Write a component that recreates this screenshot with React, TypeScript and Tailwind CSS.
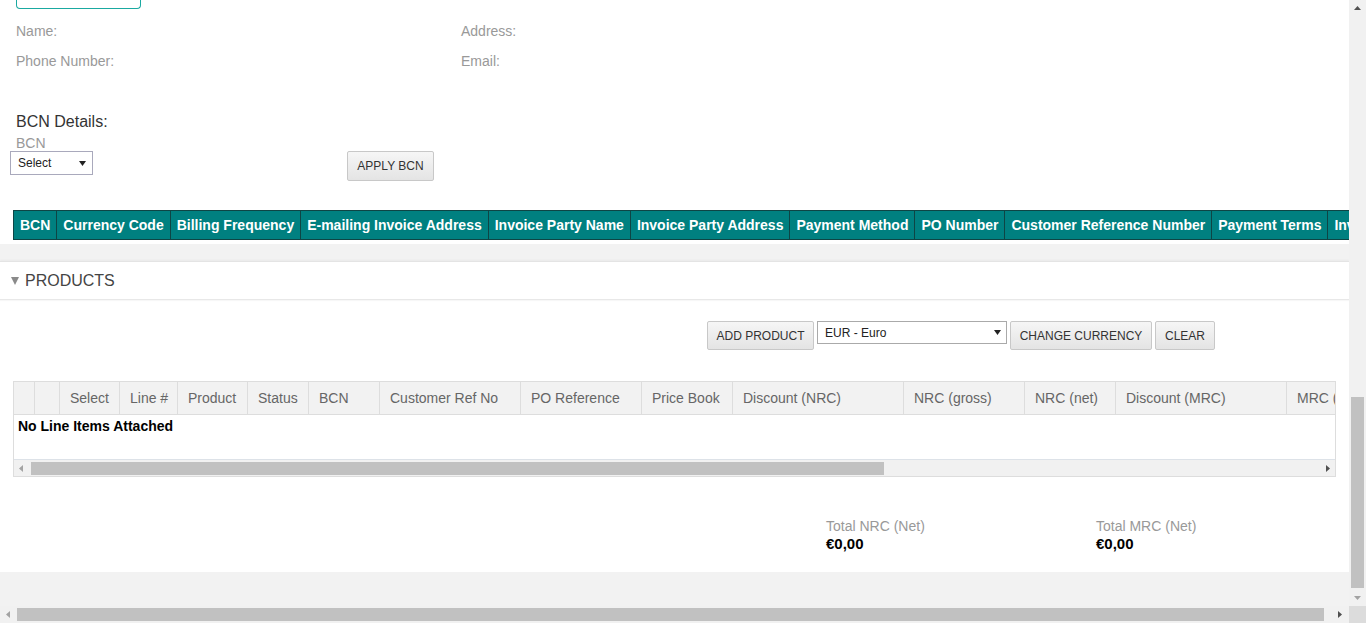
import React from "react";

const FONT = { fontFamily: '"Liberation Sans", Arial, sans-serif' };

function Tri({ dir, color, className }: { dir: "up" | "down" | "left" | "right"; color: string; className?: string }) {
  const pts =
    dir === "down" ? "0,0 8,0 4,5" : dir === "up" ? "0,5 8,5 4,0" : dir === "left" ? "5,0 5,8 0,4" : "0,0 0,8 5,4";
  const w = dir === "down" || dir === "up" ? 8 : 5;
  const h = dir === "down" || dir === "up" ? 5 : 8;
  return (
    <svg width={w} height={h} viewBox={`0 0 ${w} ${h}`} preserveAspectRatio="none" className={className}>
      <polygon points={pts} fill={color} />
    </svg>
  );
}

function GrayButton({ children, className = "" }: { children: React.ReactNode; className?: string }) {
  return (
    <button
      className={
        "border border-[#c8c8c8] rounded-[2px] bg-gradient-to-b from-[#f6f6f6] to-[#e4e4e4] text-[12px] text-[#333] px-0 leading-none whitespace-nowrap flex items-center justify-center shrink-0 " +
        className
      }
    >
      {children}
    </button>
  );
}

const bcnCols = [
  "BCN",
  "Currency Code",
  "Billing Frequency",
  "E-mailing Invoice Address",
  "Invoice Party Name",
  "Invoice Party Address",
  "Payment Method",
  "PO Number",
  "Customer Reference Number",
  "Payment Terms",
  "Invoice Template",
];

const lineCols: [string, number][] = [
  ["", 21],
  ["", 25],
  ["Select", 60],
  ["Line #", 58],
  ["Product", 70],
  ["Status", 61],
  ["BCN", 71],
  ["Customer Ref No", 141],
  ["PO Reference", 121],
  ["Price Book", 91],
  ["Discount (NRC)", 171],
  ["NRC (gross)", 121],
  ["NRC (net)", 91],
  ["Discount (MRC)", 171],
  ["MRC (gross)", 120],
];

export default function App() {
  return (
    <div style={FONT} className="w-[1366px] h-[623px] overflow-hidden flex flex-col bg-[#f2f2f2]">
      <div className="flex flex-1 min-h-0">
        {/* page content */}
        <div className="w-[1349px] shrink-0 overflow-hidden flex flex-col">
          {/* top white section */}
          <div className="bg-white h-[244px] shrink-0 overflow-hidden">
            <div className="ml-[16px] w-[125px] h-[9px] border border-t-0 border-[#1aa9a1] rounded-b-[4px]" />
            <div className="mt-[7px] grid grid-cols-[445px_1fr] pl-[16px] text-[14px] text-[#999]">
              <div className="h-[30px] flex items-center">Name:</div>
              <div className="h-[30px] flex items-center">Address:</div>
              <div className="h-[30px] flex items-center">Phone Number:</div>
              <div className="h-[30px] flex items-center">Email:</div>
            </div>
            <div className="mt-[37px] pl-[16px] text-[16px] leading-[18px] text-[#333]">BCN Details:</div>
            <div className="mt-[4px] pl-[16px] text-[14px] leading-[16px] text-[#999]">BCN</div>
            <div className="flex items-start">
              <div className="ml-[10px] w-[83px] h-[24px] border border-[#a9a9bc] flex items-center justify-between pl-[7px] pr-[6px] text-[12px] text-[#222]">
                <span>Select</span>
                <Tri dir="down" color="#222" className="w-[7px] h-[5px]" />
              </div>
              <GrayButton className="ml-[254px] w-[87px] h-[30px]">APPLY BCN</GrayButton>
            </div>
            <div className="mt-[29px] ml-[13px] flex w-max border border-[#0e4545] bg-[#008080]">
              {bcnCols.map((c, i) => (
                <div
                  key={c}
                  className={
                    "px-[6px] h-[28px] leading-[28px] text-[14px] font-bold text-white whitespace-nowrap " +
                    (i < bcnCols.length - 1 ? "border-r border-[#0e4545]" : "")
                  }
                >
                  {c}
                </div>
              ))}
            </div>
          </div>
          {/* gray gap */}
          <div className="h-[17px] shrink-0 bg-[#f2f2f2]" />
          {/* products panel */}
          <div className="bg-white h-[311px] shrink-0 border-t border-[#e4e4e4] shadow-[0_-1px_2px_rgba(0,0,0,0.04)]">
            <div className="h-[38px] flex items-center border-b border-[#e8e8e8] shadow-[0_1px_1px_rgba(0,0,0,0.03)]">
              <Tri dir="down" color="#8a8a8a" className="ml-[11px] w-[8px] h-[8px]" />
              <span className="ml-[6px] text-[16px] text-[#444]">PRODUCTS</span>
            </div>
            <div className="mt-[21px] ml-[707px] flex items-start gap-[3px]">
              <GrayButton className="w-[107px] h-[29px]">ADD PRODUCT</GrayButton>
              <div className="w-[190px] h-[23px] shrink-0 border border-[#aaaaaa] flex items-center justify-between pl-[7px] pr-[5px] text-[12px] text-[#222]">
                <span>EUR - Euro</span>
                <Tri dir="down" color="#222" className="w-[7px] h-[5px]" />
              </div>
              <GrayButton className="w-[142px] h-[29px]">CHANGE CURRENCY</GrayButton>
              <GrayButton className="w-[60px] h-[29px]">CLEAR</GrayButton>
            </div>
            <div className="mt-[31px] ml-[13px] w-[1323px] border border-[#dddddd] overflow-hidden">
              <div className="flex w-max h-[33px] bg-[#f2f2f2] border-b border-[#dddddd]">
                {lineCols.map(([c, w], i) => (
                  <div
                    key={i}
                    style={{ width: w }}
                    className="shrink-0 border-r border-[#dddddd] pl-[10px] flex items-center text-[14px] text-[#666] whitespace-nowrap overflow-hidden"
                  >
                    {c}
                  </div>
                ))}
              </div>
              <div className="h-[45px] border-b border-[#dde2e8] pl-[4px] pt-[3px] text-[14px] leading-[16px] font-bold text-black">
                No Line Items Attached
              </div>
              <div className="h-[16px] bg-[#f1f1f1] flex items-center">
                <Tri dir="left" color="#a3a3a3" className="ml-[5px] w-[4px] h-[7px]" />
                <div className="ml-[8px] w-[853px] h-[13px] bg-[#c1c1c1]" />
                <div className="flex-1" />
                <Tri dir="right" color="#505050" className="mr-[5px] w-[4px] h-[7px]" />
              </div>
            </div>
            <div className="mt-[41px] ml-[826px] flex">
              <div className="w-[270px]">
                <div className="text-[14px] leading-[16px] text-[#999]">Total NRC (Net)</div>
                <div className="mt-[1px] text-[15px] leading-[18px] font-bold text-black">€0,00</div>
              </div>
              <div>
                <div className="text-[14px] leading-[16px] text-[#999]">Total MRC (Net)</div>
                <div className="mt-[1px] text-[15px] leading-[18px] font-bold text-black">€0,00</div>
              </div>
            </div>
          </div>
          <div className="flex-1 bg-[#f2f2f2]" />
        </div>
        {/* vertical scrollbar */}
        <div className="w-[17px] shrink-0 bg-[#f1f1f1] flex flex-col items-center">
          <Tri dir="up" color="#505050" className="mt-[6px] w-[7px] h-[4px]" />
          <div className="mt-[387px] w-[13px] h-[191px] bg-[#c1c1c1]" />
          <div className="flex-1" />
          <Tri dir="down" color="#a3a3a3" className="mb-[6px] w-[7px] h-[4px]" />
        </div>
      </div>
      {/* horizontal scrollbar */}
      <div className="h-[17px] shrink-0 flex bg-[#f1f1f1]">
        <div className="w-[1349px] shrink-0 flex items-center">
          <Tri dir="left" color="#a3a3a3" className="ml-[6px] w-[4px] h-[7px]" />
          <div className="ml-[7px] w-[1307px] h-[13px] bg-[#c1c1c1]" />
          <div className="flex-1" />
          <Tri dir="right" color="#505050" className="mr-[7px] w-[4px] h-[7px]" />
        </div>
        <div className="w-[17px] bg-[#dcdcdc]" />
      </div>
    </div>
  );
}
